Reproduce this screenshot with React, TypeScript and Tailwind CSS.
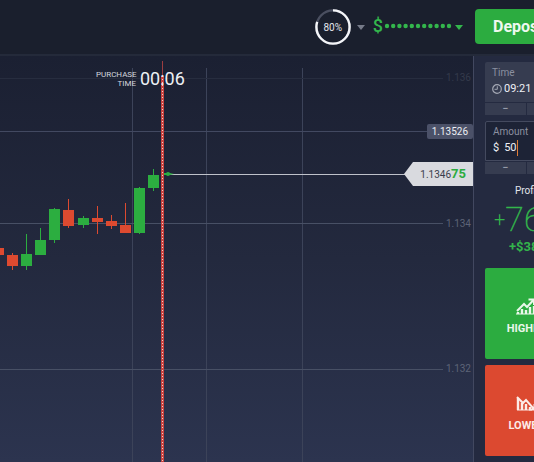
type Candle = { x: number; high: number; top: number; bottom: number; low: number; up?: boolean };

const CANDLES: Candle[] = [
  { x: -2, high: 247, top: 248, bottom: 255, low: 255 },
  { x: 12, high: 253, top: 255, bottom: 266, low: 270 },
  { x: 26, high: 234, top: 254, bottom: 266, low: 270, up: true },
  { x: 40, high: 228, top: 240, bottom: 255, low: 255, up: true },
  { x: 54, high: 208, top: 209, bottom: 240, low: 243, up: true },
  { x: 68, high: 199, top: 210, bottom: 226, low: 228 },
  { x: 83, high: 216, top: 218, bottom: 225, low: 228, up: true },
  { x: 97, high: 206, top: 218, bottom: 222, low: 234 },
  { x: 111, high: 215, top: 221, bottom: 226, low: 229 },
  { x: 125, high: 203, top: 225, bottom: 233, low: 233 },
  { x: 139, high: 187, top: 188, bottom: 233, low: 234, up: true },
  { x: 153, high: 169, top: 175, bottom: 188, low: 191, up: true },
];

// candle prices are in page pixels, the chart starts under the header
const HEADER = 56;
const DOTS = [0, 1, 2, 3, 4, 5, 6, 7, 8, 9, 10];

function Caret({ className }: { className: string }) {
  return (
    <svg width="8" height="5" viewBox="0 0 8 5" className={className} aria-hidden="true">
      <path d="M0 0H8L4 5Z" fill="currentColor" />
    </svg>
  );
}

function Header() {
  return (
    <header className="flex h-14 items-start justify-end border-b-2 border-[#242a3a] bg-[#1a1f2d] pt-[9px]">
      <button type="button" aria-label="Progress" className="flex h-9 items-center gap-[6px]">
        <span className="relative flex size-9 items-center justify-center">
          <svg viewBox="0 0 36 36" className="absolute inset-0 size-9" fill="none" strokeWidth="2.4" aria-hidden="true">
            <circle cx="18" cy="18" r="16.6" stroke="#4a4f60" />
            <circle
              cx="18"
              cy="18"
              r="16.6"
              stroke="#f4f5f8"
              pathLength="100"
              strokeDasharray="80 100"
              transform="rotate(-90 18 18)"
            />
          </svg>
          <span className="text-[10px] text-[#e4e6ec]">80%</span>
        </span>
        <Caret className="text-[#767b89]" />
      </button>
      <button type="button" aria-label="Balance" className="ml-2 flex h-[34px] items-center text-[#33b64c]">
        <span className="text-lg font-medium leading-none">$</span>
        <svg width="68" height="6" viewBox="0 0 68 6" className="ml-px" aria-hidden="true">
          {DOTS.map((i) => (
            <circle key={i} cx={3 + i * 6.2} cy="3" r="2.2" fill="currentColor" />
          ))}
        </svg>
        <Caret className="ml-[3px] mt-[2px]" />
      </button>
      <button
        type="button"
        className="ml-3 h-[35px] w-[101px] rounded-sm bg-[#2cac40] pl-[18px] text-left text-base font-bold text-[#eef8ef]"
      >
        Deposit
      </button>
    </header>
  );
}

function Chart() {
  return (
    <main className="relative min-w-0 flex-1 overflow-hidden border-r border-[#424860]">
      <svg className="absolute inset-0 h-full w-full" aria-hidden="true">
        <path d="M132.5 12V2000M206.5 12V2000M302.5 12V2000" stroke="#3c4359" />
      </svg>

      <div className="absolute inset-x-0 top-[22px] mr-[30px] h-px bg-[#272d3f]" />
      <div className="absolute inset-x-0 top-[75px] h-px bg-[#424961]" />
      <div className="absolute inset-x-0 top-[167px] mr-[30px] h-px bg-[#485065]" />
      <div className="absolute inset-x-0 top-[313px] mr-[30px] h-px bg-[#485065]" />
      <div className="absolute top-[118px] right-[60px] left-[166px] h-px bg-[#bfc2ca]" />

      <svg className="absolute inset-0 h-full w-full" role="img" aria-label="Price chart">
        <g transform={`translate(0 -${HEADER})`}>
          {CANDLES.map((c) => (
            <g key={c.x} fill={c.up ? '#2cae40' : '#dd4a30'}>
              <rect x={c.x} y={c.high} width="1" height={c.low - c.high} />
              <rect x={c.x - 5} y={c.top} width="11" height={c.bottom - c.top} />
            </g>
          ))}
        </g>
        <path d="M162.5 5V20" stroke="#9c3d40" />
        <path d="M162.5 20V2000" stroke="#c94440" strokeWidth="3" />
        <path d="M162.5 20V2000" stroke="#f3cfc9" strokeDasharray="1 2" />
        <path d="M164 117h2q2-2 4 0l4 1-4 1q-2 2-4 0h-2Z" fill="#2cae40" />
      </svg>

      <div className="absolute top-[11px] left-[96px] flex items-center gap-1">
        <div className="w-10 text-right text-[8px] leading-[9px] text-[#d4d7df]">PURCHASE TIME</div>
        <div className="text-lg leading-6 text-[#edf0f5]">00:06</div>
      </div>

      <div className="absolute top-[14px] right-[2px] text-[10px] leading-4 text-[#343a4b]">1.136</div>
      <div className="absolute top-[160px] right-[2px] text-[10px] leading-4 text-[#5d6477]">1.134</div>
      <div className="absolute top-[305px] right-[2px] text-[10px] leading-4 text-[#5d6477]">1.132</div>
      <div className="absolute top-[68px] right-0 rounded-xs bg-[#4b5168] px-[5px] text-[10px] leading-[15px] text-[#eceef3]">
        1.13526
      </div>
      <div className="absolute top-[106px] right-0 flex h-6 w-[69px] items-center justify-end bg-[#d9dadf] pr-[7px] text-[10px] text-[#3a3e4c] [clip-path:polygon(0_50%,9px_0,100%_0,100%_100%,9px_100%)]">
        1.1346<b className="text-[13px] text-[#2cac40]">75</b>
      </div>
    </main>
  );
}

function Stepper({ label }: { label: string }) {
  return (
    <div className="mt-px grid grid-cols-2 gap-px text-[11px] leading-3 text-[#b0b5c0]">
      <button type="button" aria-label={`Decrease ${label}`} className="h-3 bg-[#363c50]">
        −
      </button>
      <button type="button" aria-label={`Increase ${label}`} className="h-3 bg-[#363c50]">
        +
      </button>
    </div>
  );
}

function HigherIcon() {
  return (
    <svg width="21" height="17" viewBox="0 0 21 17" fill="none" stroke="currentColor" aria-hidden="true">
      <path d="M1 13 8 6l3 3L17.5 2M12.5 1.5H18V7" strokeWidth="2" />
      <path d="M2 16V14M6 16V11M10 16V12M14 16V9M18 16V8" strokeWidth="2.4" />
      <path d="M0 16H20" />
    </svg>
  );
}

function LowerIcon() {
  return (
    <svg width="21" height="17" viewBox="0 0 21 17" fill="none" stroke="currentColor" aria-hidden="true">
      <path d="M1 2 7 8l3-3 8 9M18.5 9v5.5H13" strokeWidth="2" />
      <path d="M2 3V15M6 8V15M10 9V15M14 12V15" strokeWidth="2.4" />
      <path d="M1 15H16" />
    </svg>
  );
}

function TradePanel() {
  return (
    <aside className="w-[102px] shrink-0 bg-[#242a40] pt-[6px] pr-2 pl-[11px]">
      <div className="h-10 rounded-t-xs bg-[#363c50] pt-1 pl-[7px]">
        <label htmlFor="time" className="block text-[10px] leading-[14px] text-[#8b90a0]">
          Time
        </label>
        <div className="flex h-[18px] items-center gap-[2px]">
          <svg width="10" height="10" viewBox="0 0 10 10" fill="none" stroke="#a4a8b4" aria-hidden="true">
            <circle cx="5" cy="5" r="4.3" strokeWidth="1.2" />
            <path d="M5.3 2.3V5.3H2.5" />
          </svg>
          <input id="time" defaultValue="09:21" className="w-14 bg-transparent text-[11px] leading-4 text-[#eef0f5] outline-none" />
        </div>
      </div>
      <Stepper label="time" />

      <div className="mt-[6px] h-10 rounded-t-xs border border-[#444a5f] bg-[#1d2336] pt-[3px] pl-[7px]">
        <label htmlFor="amount" className="block text-[10px] leading-[14px] text-[#8b90a0]">
          Amount
        </label>
        <div className="flex h-[18px] items-center text-[11px] leading-4 text-[#eef0f5]">
          <span>$</span>
          <input id="amount" defaultValue="50" className="ml-[5px] w-[14px] border-r border-[#e07b35] bg-transparent outline-none" />
        </div>
      </div>
      <Stepper label="amount" />

      <div className="mt-[9px] pl-[30px] text-[10px] leading-4 text-[#e2e5ec]">Profit</div>
      <div className="flex h-10 items-center text-[#33b54b]">
        <span className="ml-[9px] text-xl font-light">+</span>
        <span className="text-[34px] font-thin [-webkit-text-stroke:0.5px_#33b54b]">76</span>
        <span className="text-lg font-light">%</span>
      </div>
      <div className="pl-6 text-[13px] leading-4 font-bold text-[#33b54b]">+$38</div>

      <button
        type="button"
        className="mt-[13px] flex h-[91px] w-full flex-col items-center justify-center gap-[6px] rounded-xs bg-[#2cac40] pt-[7px] text-[11px] leading-4 font-bold text-[#eaf7ea]"
      >
        <HigherIcon />
        HIGHER
      </button>
      <button
        type="button"
        className="mt-[6px] flex h-[91px] w-full flex-col items-center justify-center gap-[6px] rounded-xs bg-[#dc4930] pt-[7px] text-[11px] leading-4 font-bold text-[#fcebe7]"
      >
        <LowerIcon />
        LOWER
      </button>
    </aside>
  );
}

export default function App() {
  return (
    <div className="min-h-screen overflow-hidden bg-[#1a1f2d] font-['Roboto',sans-serif]">
      {/* the trade panel runs past the right edge of the window */}
      <div className="-mr-[42px] flex min-h-screen flex-col">
        <Header />
        <div className="flex flex-1 bg-linear-to-b from-[#1b2032] via-[#23293e] to-[#2c344f]">
          <Chart />
          <TradePanel />
        </div>
      </div>
    </div>
  );
}
